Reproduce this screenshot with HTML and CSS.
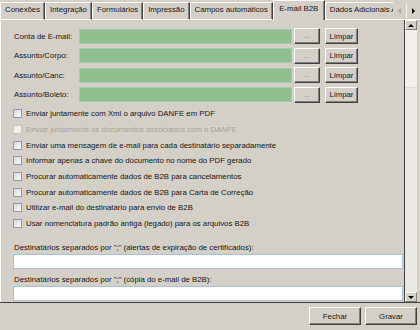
FILE: index.html
```html
<!DOCTYPE html>
<html lang="pt-BR">

<head>
    <meta charset="UTF-8">
    <title>Configurações - E-mail B2B</title>
    <link rel="stylesheet" href="styles.css">
</head>

<body>
    <div class="window">
        <!-- Tab strip -->
        <div class="tabs">
            <div class="tab-strip">
                <div class="tab">Conexões</div>
                <div class="tab">Integração</div>
                <div class="tab">Formulários</div>
                <div class="tab">Impressão</div>
                <div class="tab">Campos automáticos</div>
                <div class="tab active">E-mail B2B</div>
                <div class="tab">Dados Adicionais Automáticos</div>
            </div>
            <div class="tab-scroll">
                <span class="tab-arrow"><span class="tri-left"></span></span>
                <span class="tab-arrow"><span class="tri-right"></span></span>
            </div>
        </div>

        <div class="page">
            <div class="content">
                <div class="fields">
                    <div class="field-row">
                        <span class="field-label">Conta de E-mail:</span>
                        <div class="green-input"></div>
                        <button class="btn dots">...</button>
                        <button class="btn clear">Limpar</button>
                    </div>
                    <div class="field-row">
                        <span class="field-label">Assunto/Corpo:</span>
                        <div class="green-input"></div>
                        <button class="btn dots">...</button>
                        <button class="btn clear">Limpar</button>
                    </div>
                    <div class="field-row">
                        <span class="field-label">Assunto/Canc:</span>
                        <div class="green-input"></div>
                        <button class="btn dots">...</button>
                        <button class="btn clear">Limpar</button>
                    </div>
                    <div class="field-row">
                        <span class="field-label">Assunto/Boleto:</span>
                        <div class="green-input"></div>
                        <button class="btn dots">...</button>
                        <button class="btn clear">Limpar</button>
                    </div>
                </div>

                <div class="checks">
                    <label class="check"><span class="box"></span>Enviar juntamente com Xml o arquivo DANFE em PDF</label>
                    <label class="check disabled"><span class="box"></span>Enviar juntamente os documentos associados com o DANFE</label>
                    <label class="check"><span class="box"></span>Enviar uma mensagem de e-mail para cada destinatário separadamente</label>
                    <label class="check"><span class="box"></span>Informar apenas a chave do documento no nome do PDF gerado</label>
                    <label class="check"><span class="box"></span>Procurar automaticamente dados de B2B para cancelamentos</label>
                    <label class="check"><span class="box"></span>Procurar automaticamente dados de B2B para Carta de Correção</label>
                    <label class="check"><span class="box"></span>Utilizar e-mail do destinatário para envio de B2B</label>
                    <label class="check"><span class="box"></span>Usar nomenclatura padrão antiga (legado) para os arquivos B2B</label>
                </div>

                <div class="dest">
                    <div class="dest-label">Destinatários separados por ";" (alertas de expiração de certificados):</div>
                    <div class="dest-input"></div>
                    <div class="dest-label second">Destinatários separados por ";" (cópia do e-mail de B2B):</div>
                    <div class="dest-input"></div>
                </div>
            </div>

            <div class="vscroll">
                <div class="sb-btn"><span class="tri-up"></span></div>
                <div class="sb-track"><div class="sb-thumb"></div></div>
                <div class="sb-btn"><span class="tri-down"></span></div>
            </div>
        </div>

        <div class="footer">
            <button class="btn action">Fechar</button>
            <button class="btn action">Gravar</button>
        </div>
    </div>
</body>

</html>
```

FILE: styles.css
```css
body {
    margin: 0;
    padding: 0;
    background: #d4d0c8;
    font-family: "Liberation Sans", Arial, sans-serif;
    font-size: 7.8px;
    color: #141414;
}

.window {
    width: 420px;
    height: 330px;
    display: flex;
    flex-direction: column;
    overflow: hidden;
}

/* Tabs */

.tabs {
    height: 20px;
    display: flex;
    flex-shrink: 0;
}

.tab-strip {
    flex: 1;
    display: flex;
    align-items: flex-end;
    overflow: hidden;
}

.tab {
    flex-shrink: 0;
    box-sizing: border-box;
    height: 18px;
    line-height: 13px;
    padding: 0 4px;
    border-top: 1px solid #fff;
    border-left: 1px solid #fff;
    border-right: 1px solid #404040;
    border-bottom: 1px solid #fff;
    box-shadow: inset -1px 0 #808080;
    white-space: nowrap;
}

.tab.active {
    height: 20px;
    line-height: 16px;
    padding: 0 5.5px;
    border-bottom: none;
}

.tab-scroll {
    width: 27px;
    box-sizing: border-box;
    display: flex;
    align-items: center;
    border-bottom: 1px solid #fff;
    padding-top: 2px;
}

.tab-arrow {
    flex: 1;
    height: 14px;
    display: flex;
    align-items: center;
    justify-content: center;
}

.tab-arrow + .tab-arrow {
    border-left: 1px solid #f4f3f0;
}

.tri-left {
    border-right: 3px solid #a8a6a0;
    border-top: 3px solid transparent;
    border-bottom: 3px solid transparent;
}

.tri-right {
    border-left: 3px solid #000;
    border-top: 3px solid transparent;
    border-bottom: 3px solid transparent;
}

/* Tab page */

.page {
    height: 282px;
    box-sizing: border-box;
    display: flex;
    border-left: 1px solid #fff;
    padding-right: 3px;
}

.content {
    flex: 1;
    overflow: hidden;
    padding: 8px 1px 0 13px;
}

.fields {
    display: flex;
    flex-direction: column;
    gap: 3.5px;
}

.field-row {
    height: 16px;
    display: flex;
    align-items: center;
}

.field-label {
    width: 65px;
}

.green-input {
    width: 213px;
    height: 15px;
    box-sizing: border-box;
    background: #8fbf8c;
    border: 1px solid #a6c7b4;
}

.btn {
    box-sizing: border-box;
    height: 16px;
    padding: 0;
    background: #d4d0c8;
    border: 1px solid;
    border-color: #fff #404040 #404040 #fff;
    box-shadow: inset -1px -1px #808080;
    font: inherit;
    color: #141414;
}

.dots {
    width: 26px;
    margin-left: 2px;
    color: #8a8882;
    line-height: 14px;
}

.clear {
    width: 33px;
    margin-left: 5px;
}

.checks {
    margin-top: 3.5px;
    display: flex;
    flex-direction: column;
}

.check {
    height: 15.7px;
    display: flex;
    align-items: center;
    gap: 4px;
    margin-left: -1px;
    white-space: nowrap;
}

.box {
    width: 9px;
    height: 9px;
    box-sizing: border-box;
    border: 1px solid #8e9bb2;
    background: linear-gradient(135deg, #d8d8d4, #fbfbfa);
}

.check.disabled {
    color: #a4a29c;
}

.check.disabled .box {
    border-color: #c9c7c2;
    background: #f2f1ee;
}

.dest {
    margin-top: 10px;
}

.dest-label {
    height: 12px;
    line-height: 12px;
    white-space: nowrap;
}

.dest-label.second {
    margin-top: 5px;
}

.dest-input {
    height: 15px;
    box-sizing: border-box;
    margin-left: -1px;
    background: #fff;
    border: 1px solid #a9bfd9;
}

/* Vertical scrollbar */

.vscroll {
    width: 13px;
    box-sizing: border-box;
    border-left: 1px solid #404040;
    display: flex;
    flex-direction: column;
}

.sb-btn {
    height: 10px;
    box-sizing: border-box;
    background: #d4d0c8;
    border: 1px solid;
    border-color: #fff #808080 #808080 #fff;
    display: flex;
    align-items: center;
    justify-content: center;
}

.tri-up {
    border-bottom: 3px solid #000;
    border-left: 3px solid transparent;
    border-right: 3px solid transparent;
}

.tri-down {
    border-top: 3px solid #000;
    border-left: 3px solid transparent;
    border-right: 3px solid transparent;
}

.sb-track {
    flex: 1;
    background: #ebe9e4;
}

.sb-thumb {
    height: 58px;
    box-sizing: border-box;
    background: #f1f0ec;
    border-bottom: 1px solid #e0ded8;
}

/* Footer */

.footer {
    flex: 1;
    display: flex;
    justify-content: flex-end;
    align-items: flex-start;
    gap: 4px;
    padding: 4px 3px 0 0;
    border-top: 1px solid #404040;
}

.action {
    width: 52px;
    height: 18px;
}
```
